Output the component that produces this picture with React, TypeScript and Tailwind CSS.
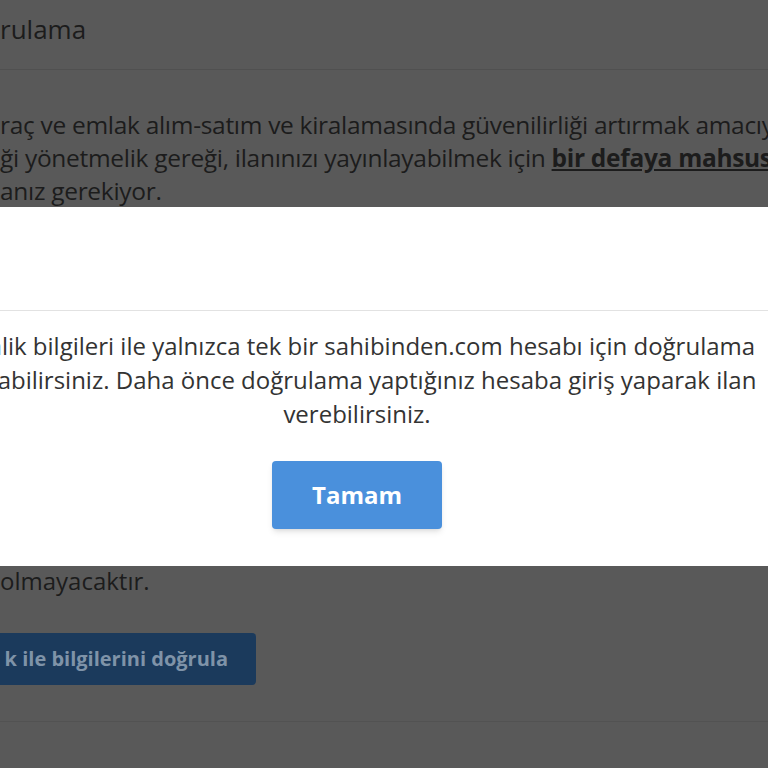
const font = { fontFamily: '"Open Sans", Roboto, sans-serif' };

const Page = () => (
    <div className="flex flex-col text-[#1c1c1c]" style={font}>
        <div className="h-[70px] border-b border-[#505050] pt-[11px] text-[26px] leading-[36px]">
            rulama
        </div>
        <div className="whitespace-nowrap pt-[38px] text-[24.5px] leading-[33px] tracking-[-0.3px]">
            <p>raç ve emlak alım-satım ve kiralamasında güvenilirliği artırmak amacıyla</p>
            <p>
                ği yönetmelik gereği, ilanınızı yayınlayabilmek için{' '}
                <span className="font-bold underline">bir defaya mahsus</span>
            </p>
            <p>anız gerekiyor.</p>
        </div>
        <div className="mt-[357px] text-[24px] leading-[33px]">olmayacaktır.</div>
        <div className="mt-[36px] flex">
            <div className="flex h-[52px] w-[256px] items-center justify-end rounded-r-sm bg-[#1b3a5c] pr-[28px] text-[20px] font-bold text-[#7f93a8] whitespace-nowrap">
                k ile bilgilerini doğrula
            </div>
        </div>
        <div className="mt-[36px] border-t border-[#525252]" />
    </div>
);

const Modal = () => (
    <div className="absolute inset-x-0 top-[207px] flex h-[359px] flex-col overflow-hidden bg-white" style={font}>
        <div className="h-[104px] border-b border-[#e2e2e2]" />
        <div className="flex justify-center pr-[54px] pt-[18px]">
            <div className="flex flex-col items-center whitespace-nowrap text-[24px] leading-[34px] text-[#333]">
                <p>Kimlik bilgileri ile yalnızca tek bir sahibinden.com hesabı için doğrulama</p>
                <p>yapabilirsiniz. Daha önce doğrulama yaptığınız hesaba giriş yaparak ilan</p>
                <p>verebilirsiniz.</p>
            </div>
        </div>
        <div className="flex justify-center pr-[54px] pt-[30px]">
            <button className="h-[68px] w-[170px] rounded-sm bg-[#4a90dc] text-[24px] font-bold text-white shadow-md">
                Tamam
            </button>
        </div>
    </div>
);

export default function App() {
    return (
        <div className="relative h-[768px] w-[768px] overflow-hidden bg-[#595959]">
            <Page />
            <Modal />
        </div>
    );
}
